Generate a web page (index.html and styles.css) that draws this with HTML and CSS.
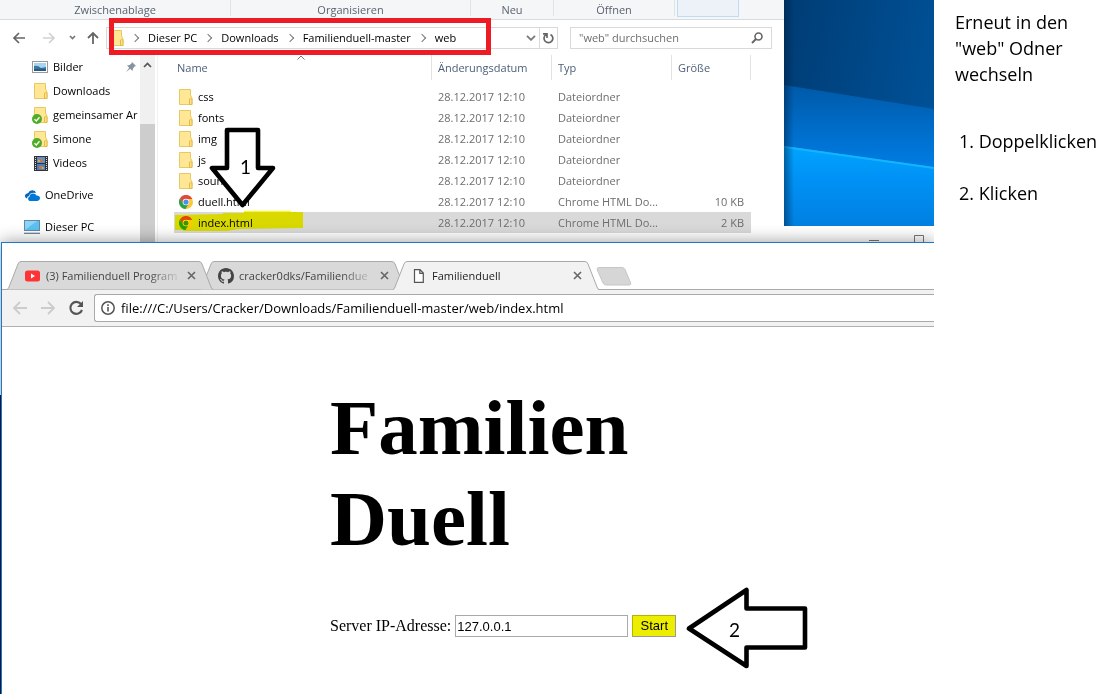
FILE: index.html
```html
<!DOCTYPE html>
<html lang="de">
<head>
<meta charset="utf-8">
<title>Familienduell</title>
<link rel="stylesheet" href="styles.css">
</head>
<body>
<svg class="symbols" aria-hidden="true">
  <symbol id="folder" viewBox="0 0 14 16">
    <path d="M.5.5H11.5V6L13 9V15.5H.5Z" fill="#ffe796" stroke="#e8c860"/>
    <path d="M10.500 15.500V10Q11.500 9 13 10V15.500Z" fill="#ffe08a" stroke="#e3bb45"/>
  </symbol>
  <symbol id="check" viewBox="0 0 10 10">
    <circle cx="5" cy="5" r="5" fill="#4fac27"/>
    <path d="M2.500 5.300L4.300 7L7.500 3.300" fill="none" stroke="#fff" stroke-width="1.300"/>
  </symbol>
  <symbol id="chrome" viewBox="0 0 14 14">
    <circle cx="7" cy="7" r="7" fill="#fbc934"/>
    <path d="M.9 3.500A7 7 0 0 1 13.100 3.500L13.100 4H7L4.400 8.500Z" fill="#e0483c"/>
    <path d="M.9 3.500A7 7 0 0 0 6.500 14L9.800 8.500H4.400Z" fill="#2ba14b"/>
    <circle cx="7" cy="7" r="3.300" fill="#fff"/>
    <circle cx="7" cy="7" r="2.600" fill="#4b8df0"/>
  </symbol>
  <symbol id="close" viewBox="0 0 9 9">
    <path d="M1 1L8 8M8 1L1 8" stroke="currentColor" stroke-width="1.600"/>
  </symbol>
  <symbol id="tab" viewBox="0 0 206 29">
    <path d="M0 28.500Q1.500 28 2 26L11 3Q12 .5 14 .5H192Q194 .5 195 3L204 26Q205 28.500 206 28.500" stroke="#a9a9a9"/>
  </symbol>
</svg>
<div class="layout">
  <main class="screen">
    <div class="desktop">
      <svg class="wallpaper" viewBox="0 0 150 226" preserveAspectRatio="none" aria-hidden="true">
        <defs>
          <linearGradient id="night" x1="0" y1="0" x2="1" y2="0.300"><stop offset="0" stop-color="#003c74"/><stop offset="1" stop-color="#005096"/></linearGradient>
          <linearGradient id="beam" x1="0" y1="0" x2="0" y2="1"><stop offset="0" stop-color="#0059a8"/><stop offset="0.500" stop-color="#0078dc"/><stop offset="1" stop-color="#0090f5"/></linearGradient>
          <linearGradient id="glow" x1="0" y1="0" x2="0" y2="1"><stop offset="0" stop-color="#00a4ff"/><stop offset="0.400" stop-color="#0092f6"/><stop offset="1" stop-color="#0080e0"/></linearGradient>
          <linearGradient id="edge"><stop offset="0" stop-color="#002040" stop-opacity=".5"/><stop offset="1" stop-color="#002040" stop-opacity="0"/></linearGradient>
        </defs>
        <rect width="150" height="226" fill="url(#night)"/>
        <path d="M0 85L150 109V226H0Z" fill="url(#beam)"/>
        <path d="M0 146L150 167V226H0Z" fill="url(#glow)"/>
        <path d="M0 147L150 168" stroke="#14b4ff" stroke-width="2"/>
        <rect width="10" height="226" fill="url(#edge)"/>
      </svg>
      <div class="back-window">
        <svg width="60" height="12" viewBox="0 0 60 12" aria-hidden="true"><path d="M0 5.500H10M45.500 12V.5H54.500V12" fill="none" stroke="#777"/></svg>
      </div>
    </div>

    <section class="explorer">
      <div class="ribbon">
        <span class="group g-clip">Zwischenablage</span>
        <span class="group g-org">Organisieren</span>
        <span class="group g-new">Neu</span>
        <span class="group g-open">Öffnen</span>
        <span class="ribbon-active"></span>
      </div>
      <div class="address-row">
        <div class="nav-icons">
          <svg width="90" height="14" viewBox="0 0 90 14" fill="none" aria-hidden="true">
            <path d="M13 7H2M7 2L2 7L7 12" stroke="#666" stroke-width="1.700"/>
            <path d="M31 7H42M37 2L42 7L37 12" stroke="#d2d2d2" stroke-width="1.700"/>
            <path d="M58 5L60.500 7.500L63 5" stroke="#777" stroke-width="1.700"/>
            <path d="M81 13V2M76 7L81 2L86 7" stroke="#666" stroke-width="1.800"/>
          </svg>
        </div>
        <div class="address">
          <svg class="folder" aria-hidden="true"><use href="#folder"/></svg>
          <ol class="crumbs">
            <li>Dieser PC</li><li>Downloads</li><li>Familienduell-master</li><li>web</li>
          </ol>
          <svg class="drop" width="10" height="6" viewBox="0 0 10 6" aria-hidden="true"><path d="M1 .8L5 4.800L9 .8" fill="none" stroke="#777" stroke-width="1.800"/></svg>
          <button class="reload" aria-label="Aktualisieren"><svg width="11" height="12" viewBox="0 0 11 12" aria-hidden="true"><path d="M7.500 2.400A4.400 4.400 0 1 1 3 2.600M0 1.800H4V6" fill="none" stroke="#666" stroke-width="1.700"/></svg></button>
        </div>
        <div class="search">
          <input type="text" aria-label="Suche" placeholder="&quot;web&quot; durchsuchen">
          <svg width="12" height="12" viewBox="0 0 12 12" aria-hidden="true"><circle cx="7.500" cy="4.500" r="3.500" fill="none" stroke="#666" stroke-width="1.600"/><path d="M5 7L1 11" stroke="#666" stroke-width="1.900"/></svg>
        </div>
      </div>
      <div class="explorer-body">
        <nav class="tree">
          <ul>
            <li><svg class="pic" viewBox="0 0 16 12" aria-hidden="true"><rect x=".5" y=".5" width="15" height="11" fill="#fff" stroke="#999"/><rect x="2" y="2" width="12" height="8" fill="#a8d4f2"/><path d="M2 5Q6 4 9 7L14 6V10H2Z" fill="#397b9e"/><path d="M2 8Q8 7 14 8V10H2Z" fill="#285a88"/></svg><span>Bilder</span>
              <svg class="pin" viewBox="0 0 10 10" aria-hidden="true"><path d="M6 0L10 4L8.500 4.500L7 6.500L6.500 9L4.200 6.800L0 10L3.200 5.800L1 3.500L3.500 3L5.500 1.500Z" fill="#8794a0"/></svg></li>
            <li><svg class="folder" aria-hidden="true"><use href="#folder"/></svg><span>Downloads</span></li>
            <li><svg class="folder" aria-hidden="true"><use href="#folder"/></svg><svg class="check" aria-hidden="true"><use href="#check"/></svg><span>gemeinsamer Ar</span></li>
            <li><svg class="folder" aria-hidden="true"><use href="#folder"/></svg><svg class="check" aria-hidden="true"><use href="#check"/></svg><span>Simone</span></li>
            <li><svg class="video" viewBox="0 0 14 15" aria-hidden="true"><rect width="14" height="15" fill="#333"/><path d="M1.500 1V15M12.500 1V15" stroke="#ddd" stroke-dasharray="1 1"/><rect x="3" y="1" width="8" height="6" fill="#5f8fd0"/><rect x="3" y="8" width="8" height="6" fill="#4d7cc0"/><path d="M5 3H9V6H5ZM5 10H9V13H5Z" fill="#c87848"/><path d="M4 5H6M8 12H10" stroke="#eadb47"/></svg><span>Videos</span></li>
            <li class="root"><svg class="cloud" viewBox="0 0 16 11" aria-hidden="true"><path d="M3 8.500A2.500 2.500 0 0 1 2 4Q3 3 4 3.200Q5.500 0 8.500 .2Q11.500 .5 12 3Q6 2 5 6Q3 6 3 8.500Z" fill="#0a64b8"/><path d="M5.500 11A2.300 2.300 0 0 1 5.500 6.700Q6 3.500 9 3.500Q11.500 3.500 12.500 5.500Q16 5.500 16 8.300Q16 10.500 13.500 11Z" fill="#0078d7"/></svg><span>OneDrive</span></li>
            <li class="root"><svg class="pc" viewBox="0 0 16 14" aria-hidden="true"><rect x=".5" y=".5" width="15" height="10" fill="#5bc1f3" stroke="#6689a0"/><path d="M1 10V1H13Z" fill="#8ad6fa"/><path d="M0 13.300H16" stroke="#5a7a90" stroke-width="1.200"/></svg><span>Dieser PC</span></li>
          </ul>
          <div class="scrollbar"><svg width="9" height="6" viewBox="0 0 9 6" aria-hidden="true"><path d="M1 5L4.500 1.500L8 5" fill="none" stroke="#555" stroke-width="1.700"/></svg><span class="thumb"></span></div>
        </nav>
        <div class="files">
          <table>
            <colgroup><col><col class="c-date"><col class="c-type"><col class="c-size"></colgroup>
            <thead><tr><th><span>Name<svg class="sort" viewBox="0 0 8 5" aria-hidden="true"><path d="M.5 4.500L4 1L7.500 4.500" fill="none" stroke="#777"/></svg></span></th><th><span>Änderungsdatum</span></th><th><span>Typ</span></th><th><span>Größe</span></th></tr></thead>
            <tbody>
              <tr><td><svg class="folder" aria-hidden="true"><use href="#folder"/></svg>css</td><td>28.12.2017 12:10</td><td>Dateiordner</td><td></td></tr>
              <tr><td><svg class="folder" aria-hidden="true"><use href="#folder"/></svg>fonts</td><td>28.12.2017 12:10</td><td>Dateiordner</td><td></td></tr>
              <tr><td><svg class="folder" aria-hidden="true"><use href="#folder"/></svg>img</td><td>28.12.2017 12:10</td><td>Dateiordner</td><td></td></tr>
              <tr><td><svg class="folder" aria-hidden="true"><use href="#folder"/></svg>js</td><td>28.12.2017 12:10</td><td>Dateiordner</td><td></td></tr>
              <tr><td><svg class="folder" aria-hidden="true"><use href="#folder"/></svg>sounds</td><td>28.12.2017 12:10</td><td>Dateiordner</td><td></td></tr>
              <tr><td><svg class="chrome" aria-hidden="true"><use href="#chrome"/></svg>duell.html</td><td>28.12.2017 12:10</td><td>Chrome HTML Do...</td><td>10 KB</td></tr>
              <tr class="selected"><td><svg class="chrome" aria-hidden="true"><use href="#chrome"/></svg>index.html</td><td>28.12.2017 12:10</td><td>Chrome HTML Do...</td><td>2 KB</td></tr>
            </tbody>
          </table>
        </div>
      </div>
    </section>

    <section class="browser">
      <div class="tabs">
        <div class="tab first"><svg class="shape" aria-hidden="true"><use href="#tab"/></svg>
          <svg class="icon" width="16" height="12" viewBox="0 0 16 12" aria-hidden="true"><rect y=".5" width="15" height="11" rx="2.500" fill="#f33"/><path d="M6 3.500V8.500L10 6Z" fill="#fff"/></svg>
          <span class="title faded">(3) Familienduell Program</span><button class="x" aria-label="Schließen"><svg aria-hidden="true"><use href="#close"/></svg></button></div>
        <div class="tab"><svg class="shape" aria-hidden="true"><use href="#tab"/></svg>
          <svg class="icon" width="16" height="16" viewBox="0 0 16 16" aria-hidden="true"><path fill="#444" d="M8 0C3.580 0 0 3.580 0 8c0 3.540 2.290 6.530 5.470 7.590.4.070.55-.17.55-.38 0-.19-.01-.82-.01-1.490-2.010.37-2.530-.49-2.690-.94-.09-.23-.48-.94-.82-1.130-.28-.15-.68-.52-.01-.53.63-.01 1.080.58 1.230.82.72 1.210 1.870.87 2.330.66.070-.52.280-.87.510-1.070-1.780-.2-3.640-.89-3.640-3.950 0-.87.310-1.590.82-2.150-.08-.2-.36-1.020.08-2.120 0 0 .67-.21 2.200.82.640-.18 1.320-.27 2-.27s1.360.09 2 .27c1.530-1.040 2.200-.82 2.200-.82.440 1.100.160 1.920.080 2.120.510.560.820 1.270.820 2.150 0 3.070-1.870 3.750-3.650 3.950.290.250.540.730.540 1.480 0 1.070-.01 1.930-.01 2.200 0 .210.150.460.550.380A8.010 8.010 0 0 0 16 8c0-4.420-3.580-8-8-8Z"/></svg>
          <span class="title faded">cracker0dks/Familiendue</span><button class="x" aria-label="Schließen"><svg aria-hidden="true"><use href="#close"/></svg></button></div>
        <div class="tab current"><svg class="shape" aria-hidden="true"><use href="#tab"/></svg>
          <svg class="icon" width="16" height="14" viewBox="0 0 16 14" aria-hidden="true"><path d="M3.500.7H9L12.300 4V13.300H3.500ZM8.800 1V4.300H12" fill="#fff" stroke="#555" stroke-width="1.200"/></svg>
          <span class="title">Familienduell</span><button class="x" aria-label="Schließen"><svg aria-hidden="true"><use href="#close"/></svg></button></div>
        <svg class="new-tab" width="36" height="19" viewBox="0 0 36 19" aria-hidden="true"><path d="M3 .5H26Q28 .5 29 2.500L34.500 15.500Q35.500 18 33 18H10Q8 18 7 16L1.300 3Q.5.5 3 .5Z" fill="#d6d6d6" stroke="#c6c6c6"/></svg>
      </div>
      <div class="toolbar">
        <svg width="74" height="16" viewBox="0 0 74 16" fill="none" aria-hidden="true">
          <path d="M15 8H2M8 2L2 8L8 14" stroke="#ccc" stroke-width="1.800"/>
          <path d="M29 8H42M36 2L42 8L36 14" stroke="#ccc" stroke-width="1.800"/>
          <path d="M69 4A6 6 0 1 0 70 10" stroke="#555" stroke-width="2.100"/><path d="M71 1V7H65Z" fill="#555"/>
        </svg>
        <div class="url">
          <svg width="14" height="14" viewBox="0 0 14 14" aria-hidden="true"><circle cx="7" cy="7" r="6.200" fill="none" stroke="#555" stroke-width="1.500"/><path d="M7 6V10.500M7 3.300V5" stroke="#555" stroke-width="1.600"/></svg>
          <input type="text" aria-label="Adresse" value="file:///C:/Users/Cracker/Downloads/Familienduell-master/web/index.html">
        </div>
      </div>
      <div class="page">
        <h1>Familien<br>Duell</h1>
        <form class="server">
          <label for="ip">Server IP-Adresse:</label>
          <input id="ip" type="text" value="127.0.0.1">
          <button type="button">Start</button>
        </form>
      </div>
    </section>

    <div class="red-frame"></div>
    <svg class="marker" width="130" height="22" viewBox="0 0 130 22" aria-hidden="true"><path d="M1 5L49 4V3H70V1H117V2H129V18L65 19L53 21H9V20H1Z" fill="#ff0"/></svg>
    <div class="callout down">
      <svg width="68" height="82" viewBox="0 0 68 82" aria-hidden="true"><path d="M18 3H49V41H64L33.500 78L3 41H18Z" fill="#fff" stroke="#000" stroke-width="4.600" stroke-linejoin="round"/></svg>
      <span>1</span>
    </div>
    <div class="callout left">
      <svg width="122" height="82" viewBox="0 0 122 82" aria-hidden="true"><path d="M3 41.500L60.500 3V21.500H119V60.500H60.500V79Z" fill="#fff" stroke="#000" stroke-width="4.600" stroke-linejoin="round"/></svg>
      <span>2</span>
    </div>
  </main>
  <aside class="notes">
    <p>Erneut in den "web" Odner wechseln</p>
    <ol><li>Doppelklicken</li><li>Klicken</li></ol>
  </aside>
</div>
</body>
</html>
```

FILE: styles.css
```css
* { box-sizing: border-box; }
body { margin: 0; background: #fff; color: #000; font-family: "Open Sans", "Noto Sans", sans-serif; font-size: 11px; line-height: 16px; }
button, input { font: inherit; color: inherit; border-radius: 0; }
ul, ol { list-style: none; margin: 0; padding: 0; }
svg { display: block; flex: none; }
.symbols { position: absolute; width: 0; height: 0; }
.layout { display: flex; min-height: 100vh; }
.screen { position: relative; flex: 1; min-width: 0; padding: 242px 0 0 1px; display: flex; overflow: hidden; background: #001c38; }

/* Desktop behind the windows */
.desktop { position: absolute; top: 0; right: 0; width: 150px; }
.wallpaper { width: 100%; height: 226px; }
.back-window { height: 20px; padding: 9px 0 0 85px; background: #fff; }
.folder { width: 14px; height: 16px; }
.chrome { width: 14px; height: 14px; }

/* File explorer */
.explorer { position: absolute; top: 0; left: 0; right: 150px; height: 395px; background: #fff; overflow: hidden; }
.ribbon { display: flex; height: 20px; background: #f5f6f7; border-bottom: 1px solid #dadbdc; color: #5a6470; }
.group { height: 16px; text-align: center; line-height: 20px; border-right: 1px solid #e2e3e4; }
.g-clip { width: 231px; }
.g-org { width: 240px; }
.g-new { width: 83px; }
.g-open { width: 121px; }
.ribbon-active { width: 62px; height: 17px; margin-left: 2px; background: #ecf2f7; border: 1px solid #c0dcf3; border-top: 0; }
.address-row { display: flex; align-items: center; height: 35px; padding: 0 12px; }
.nav-icons { width: 94px; }
.address { display: flex; align-items: center; flex: 1; height: 22px; padding-left: 3px; border: 1px solid #d9d9d9; }
.crumbs { display: flex; flex: 1; }
.crumbs li { display: flex; align-items: center; }
.crumbs li::before { content: ""; width: 5px; height: 5px; margin: 0 10px 0 8px; border: solid #777; border-width: 1px 1px 0 0; transform: rotate(45deg); }
.drop { margin-right: 3px; }
.reload { display: flex; align-items: center; justify-content: center; width: 18px; height: 20px; padding: 0; background: none; border: 0; border-left: 1px solid #d9d9d9; }
.search { display: flex; align-items: center; width: 202px; height: 22px; margin-left: 12px; padding: 0 8px; border: 1px solid #d9d9d9; }
.search input { flex: 1; min-width: 0; padding: 0; border: 0; outline: 0; background: none; }
.search input::placeholder { color: #6d6d6d; opacity: 1; }
.explorer-body { display: flex; height: 340px; }
.tree { display: flex; width: 155px; }
.tree ul { flex: 1; min-width: 0; overflow: hidden; }
.tree li { position: relative; display: flex; align-items: center; height: 24px; padding-left: 32px; white-space: nowrap; }
.tree li > svg { margin-right: 5px; }
.tree li .folder, .tree li .video { margin: 0 5px 0 2px; }
.tree li.root { height: 32px; padding-left: 24px; }
.tree li:not(.root) + .root { margin-top: 4px; }
.pic { width: 16px; height: 12px; }
.video { width: 14px; height: 15px; }
.cloud { width: 16px; height: 11px; }
.pc { width: 16px; height: 14px; }
.tree li .check { position: absolute; left: 32px; bottom: 3px; width: 10px; height: 10px; margin: 0; }
.tree li .pin { width: 10px; height: 10px; margin: 0 4px 0 auto; }
.scrollbar { display: flex; flex-direction: column; align-items: center; width: 15px; padding-top: 7px; background: #f0f0f0; }
.thumb { width: 15px; flex: 1; margin-top: 56px; background: #cdcdcd; }
.files { flex: 1; padding: 0 33px 0 16px; margin-left: 2px; border-left: 1px solid #f0f0f0; }
table { width: 100%; table-layout: fixed; border-collapse: collapse; color: #6d6d6d; }
.c-date, .c-type { width: 120px; }
.c-size { width: 79px; }
th { height: 31px; padding: 0; font-weight: 400; text-align: left; color: #4c607a; vertical-align: top; }
th span { position: relative; display: block; height: 25px; padding-left: 6px; line-height: 26px; border-right: 1px solid #e2e2e2; }
th:first-child span { padding-left: 3px; }
.sort { position: absolute; top: 0; left: 123px; width: 8px; height: 5px; }
td { height: 21px; padding: 0 0 0 6px; white-space: nowrap; }
td:first-child { display: flex; align-items: center; gap: 5px; padding-left: 5px; color: #000; }
td:last-child { padding-right: 7px; text-align: right; }
.selected td { background: #d9d9d9; }

/* Browser */
.browser { position: relative; flex: 1; min-width: 0; background: #fff; border: solid #1979ca; border-width: 1px 0 0 1px; box-shadow: 0 0 16px rgba(0, 0, 0, .4); }
.tabs { display: flex; height: 47px; padding: 18px 0 0 5px; border-bottom: 1px solid #a9a9a9; }
.tab { position: relative; display: flex; align-items: center; width: 206px; height: 29px; margin-right: -13px; padding: 0 17px 0 18px; color: #444; fill: #d9d9d9; }
.tab.first { z-index: 1; }
.tab.current { z-index: 2; color: #222; fill: #f2f2f2; }
.current::after { content: ""; position: absolute; left: 1px; right: 1px; bottom: 0; height: 1px; background: #f2f2f2; }
.shape { position: absolute; top: 0; left: 0; width: 206px; height: 29px; }
.icon { position: relative; }
.title { position: relative; flex: 1; min-width: 0; margin: 0 5px; white-space: nowrap; }
.faded { -webkit-mask-image: linear-gradient(to right, #000 75%, transparent); mask-image: linear-gradient(to right, #000 75%, transparent); }
.x { position: relative; padding: 0; border: 0; background: none; color: #666; }
.x svg { width: 9px; height: 9px; }
.new-tab { margin: 6px 0 0 10px; }
.toolbar { display: flex; align-items: center; height: 37px; padding-left: 10px; background: #f2f2f2; border-bottom: 1px solid #b0b0b0; }
.url { display: flex; flex: 1; align-items: center; height: 28px; margin-left: 8px; padding-left: 6px; background: #fff; border: 1px solid #a9a9a9; border-right: 0; border-radius: 3px 0 0 3px; }
.url input { flex: 1; min-width: 0; margin-left: 6px; padding: 0; border: 0; outline: 0; font-size: 13px; }
.page { padding: 55px 0 57px 328px; font-family: "Liberation Serif", serif; }
h1 { margin: 0; font-size: 79px; line-height: 91px; }
.server { display: flex; align-items: center; gap: 4px; margin-top: 51px; font-size: 16px; }
.server input { width: 173px; height: 22px; padding: 0 1px; border: 1px solid #a9a9a9; font-family: "Liberation Sans", sans-serif; font-size: 13px; }
.server button { width: 44px; height: 22px; padding: 0; background: #eded00; border: 1px solid #999; border-color: #b5b500 #999 #999 #b5b500; font-family: "Liberation Sans", sans-serif; font-size: 13px; }

/* Annotations */
.red-frame { position: absolute; top: 18px; left: 109px; width: 382px; height: 37px; border: 5px solid #ed1c24; }
.marker { position: absolute; top: 210px; left: 174px; mix-blend-mode: multiply; }
.callout { position: absolute; font-family: Lato, sans-serif; font-size: 19px; line-height: 24px; }
.callout span { position: absolute; }
.down { top: 127px; left: 209px; }
.down span { top: 28px; left: 31px; }
.left { top: 587px; left: 686px; }
.left span { top: 31px; left: 43px; }
.notes { width: 177px; padding: 9px 4px 0 21px; font-size: 18px; line-height: 26px; }
.notes p { width: 130px; margin: 0 0 41px; }
.notes ol { display: grid; gap: 26px; margin-left: 4px; counter-reset: step; }
.notes li { counter-increment: step; white-space: nowrap; }
.notes li::before { content: counter(step) ". "; }
```
